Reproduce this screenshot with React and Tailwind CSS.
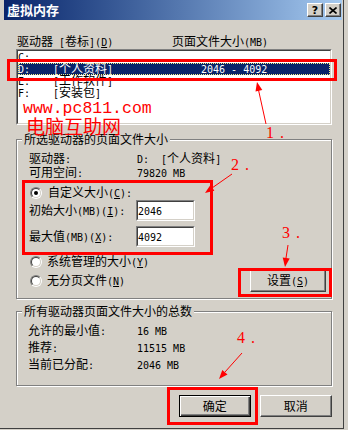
import React from "react";

const LAT = "font-['DejaVu_Sans_Mono',monospace] text-[10px]";

function T({ s, className = "" }) {
  const out = [];
  const isA = (c) => c.charCodeAt(0) < 128;
  let i = 0;
  while (i < s.length) {
    const c = s[i];
    if (c === "_") {
      out.push(
        <span key={i} className={`${LAT} underline underline-offset-[1px]`}>
          {s[i + 1]}
        </span>
      );
      i += 2;
      continue;
    }
    const a = isA(c);
    let j = i;
    while (j < s.length && s[j] !== "_" && isA(s[j]) === a) j++;
    out.push(
      <span key={i} className={a ? LAT : ""}>
        {s.slice(i, j)}
      </span>
    );
    i = j;
  }
  return <span className={`whitespace-pre ${className}`}>{out}</span>;
}

function Radio({ on }) {
  return (
    <div className="w-[12px] h-[12px] shrink-0 rounded-full border border-t-[#808080] border-l-[#808080] border-b-white border-r-white">
      <div className="flex w-full h-full items-center justify-center rounded-full border border-t-[#404040] border-l-[#404040] border-b-[#D4D0C8] border-r-[#D4D0C8] bg-white">
        {on && <div className="w-[4px] h-[4px] rounded-full bg-black" />}
      </div>
    </div>
  );
}

function Sunken({ className = "", children }) {
  return (
    <div className={`border border-t-[#808080] border-l-[#808080] border-b-white border-r-white ${className}`}>
      <div className="h-full border border-t-[#404040] border-l-[#404040] border-b-[#D4D0C8] border-r-[#D4D0C8] bg-white overflow-hidden">
        {children}
      </div>
    </div>
  );
}

const RAISED =
  "border border-t-white border-l-white border-b-[#404040] border-r-[#404040] shadow-[inset_-1px_-1px_0_#808080] bg-[#D4D0C8]";

function Row({ drive, label, size, sel }) {
  return (
    <div
      className={`flex h-[12px] items-center ${
        sel ? "bg-[#0A246A] text-white outline-1 outline-dotted outline-[#f2f08a] -outline-offset-1" : ""
      }`}
    >
      <div className="w-[35px]">
        <T s={drive} />
      </div>
      <div className="w-[148px]">
        <T s={label} />
      </div>
      {size && <T s={size} />}
    </div>
  );
}

function Group({ title, className = "", children }) {
  return (
    <div className={`flex flex-col border border-[#808080] shadow-[inset_1px_1px_0_#fff,1px_1px_0_#fff] ${className}`}>
      <div className="-mt-[7px] ml-[5px] px-[2px] h-[12px] self-start bg-[#D4D0C8]">
        <T s={title} />
      </div>
      {children}
    </div>
  );
}

function Num({ n, x, y }) {
  return (
    <div
      className="absolute flex font-['Liberation_Serif',serif] text-[16px] leading-[16px] text-[#FF0000]"
      style={{ left: x, top: y }}
    >
      <span>{n}</span>
      <span className="ml-[6px]">.</span>
    </div>
  );
}

export default function App() {
  return (
    <div className="relative w-[348px] h-[430px] overflow-hidden bg-[#D4D0C8] font-['Noto_Sans_CJK_SC',sans-serif] text-[12px] leading-[12px] text-black">
      <div className="w-[344px] h-[429px] border-r border-b border-[#404040]">
        {/* Title bar */}
        <div className="ml-[4px] mr-[1px] h-[20px] flex items-center bg-linear-to-r from-[#0A246A] to-[#A6CAF0] pl-[3px] pr-[1px]">
          <span className="text-white font-bold text-[13px] leading-[14px]">虚拟内存</span>
          <div className="ml-auto flex gap-[2px]">
            <div className={`w-[16px] h-[14px] flex items-center justify-center ${RAISED}`}>
              <span className="font-['DejaVu_Sans',sans-serif] font-bold text-[11px] leading-[11px] text-black">?</span>
            </div>
            <div className={`w-[16px] h-[14px] flex items-center justify-center ${RAISED}`}>
              <svg width="8" height="7" viewBox="0 0 8 7">
                <path d="M0.5 0.5 L7.5 6.5 M7.5 0.5 L0.5 6.5" stroke="#000" strokeWidth="1.6" />
              </svg>
            </div>
          </div>
        </div>

        {/* Body */}
        <div className="ml-[16px] w-[316px] flex flex-col">
          <div className="mt-[15px] flex h-[12px]">
            <div className="w-[156px] pl-[1px]">
              <T s="驱动器 [卷标](_D)" />
            </div>
            <T s="页面文件大小(MB)" />
          </div>

          <Sunken className="mt-[2px] h-[76px]">
            <Row drive="C:" label="" />
            <Row drive="D:" label="[个人资料]" size="2046 - 4092" sel />
            <Row drive="E:" label="[工作软件]" />
            <Row drive="F:" label="[安装包]" />
          </Sunken>

          <Group title="所选驱动器的页面文件大小" className="mt-[14px] h-[160px]">
            <div className="mt-[7px] flex h-[12px] pl-[12px]">
              <div className="w-[108px]">
                <T s="驱动器:" />
              </div>
              <T s="D:  [个人资料]" />
            </div>
            <div className="mt-[2px] flex h-[12px] pl-[12px]">
              <div className="w-[108px]">
                <T s="可用空间:" />
              </div>
              <T s="79820 MB" />
            </div>
            <div className="mt-[9px] flex h-[12px] items-center pl-[13px]">
              <Radio on />
              <T s="自定义大小(_C):" className="ml-[6px]" />
            </div>
            <div className="mt-[1px] flex h-[21px] items-center pl-[12px]">
              <div className="w-[107px]">
                <T s="初始大小(MB)(_I):" />
              </div>
              <Sunken className="w-[59px] h-[21px]">
                <div className="h-full flex items-center">
                  <T s="2046" />
                </div>
              </Sunken>
            </div>
            <div className="mt-[5px] flex h-[21px] items-center pl-[12px]">
              <div className="w-[107px]">
                <T s="最大值(MB)(_X):" />
              </div>
              <Sunken className="w-[59px] h-[21px]">
                <div className="h-full flex items-center">
                  <T s="4092" />
                </div>
              </Sunken>
            </div>
            <div className="mt-[9px] flex h-[12px] items-center pl-[13px]">
              <Radio />
              <T s="系统管理的大小(_Y)" className="ml-[5px]" />
            </div>
            <div className="mt-[2px] flex h-[22px] items-center pl-[13px] pr-[5px]">
              <Radio />
              <T s="无分页文件(_N)" className="ml-[5px]" />
              <div className={`ml-auto w-[76px] h-[22px] flex items-center justify-center ${RAISED}`}>
                <T s="设置(_S)" />
              </div>
            </div>
          </Group>

          <Group title="所有驱动器页面文件大小的总数" className="mt-[12px] h-[75px]">
            <div className="mt-[7px] flex h-[12px] pl-[11px]">
              <div className="w-[109px]">
                <T s="允许的最小值:" />
              </div>
              <T s="16 MB" />
            </div>
            <div className="mt-[5px] flex h-[12px] pl-[11px]">
              <div className="w-[109px]">
                <T s="推荐:" />
              </div>
              <T s="11515 MB" />
            </div>
            <div className="mt-[5px] flex h-[12px] pl-[11px]">
              <div className="w-[109px]">
                <T s="当前已分配:" />
              </div>
              <T s="2046 MB" />
            </div>
          </Group>

          <div className="mt-[9px] ml-[163px] flex gap-[9px]">
            <div className="w-[72px] h-[22px] flex items-center justify-center border border-black bg-[#D4D0C8] shadow-[inset_1px_1px_0_#fff,inset_-1px_-1px_0_#404040,inset_-2px_-2px_0_#808080]">
              确定
            </div>
            <div className={`w-[73px] h-[22px] flex items-center justify-center ${RAISED}`}>取消</div>
          </div>
        </div>
      </div>

      {/* Annotations */}
      <div className="absolute left-[23px] top-[101px] font-['Liberation_Mono',monospace] text-[16.5px] leading-[16.5px] text-[#FF0000] whitespace-pre">
        www.pc811.com
      </div>
      <div className="absolute left-[26px] top-[116px] text-[19px] leading-[19px] text-[#FF0000]">电脑互助网</div>

      <div className="absolute left-[7px] top-[59px] w-[330px] h-[22px] border-[3px] border-[#FF0000]" />
      <div className="absolute left-[22px] top-[180px] w-[191px] h-[75px] border-[3px] border-[#FF0000]" />
      <div className="absolute left-[238px] top-[268px] w-[94px] h-[29px] border-[3px] border-[#FF0000]" />
      <div className="absolute left-[167px] top-[387px] w-[91px] h-[38px] border-[3px] border-[#FF0000]" />

      <svg className="absolute left-0 top-0 pointer-events-none" width="348" height="430">
        <g stroke="#FF0000" strokeWidth="1" fill="none">
          <line x1="266" y1="124" x2="258.5" y2="90" />
          <line x1="232" y1="174" x2="212" y2="188" />
          <line x1="288" y1="245" x2="286" y2="258" />
          <line x1="242" y1="353" x2="225" y2="372" />
        </g>
        <g fill="#FF0000">
          <polygon points="257,82 262.3,90.1 255.5,91.5" />
          <polygon points="205,193 214.4,190.7 210.4,184.9" />
          <polygon points="285,267 289.7,258.6 282.7,257.6" />
          <polygon points="219,379 227.5,374.6 222.3,370" />
        </g>
      </svg>

      <Num n="1" x={266} y={125} />
      <Num n="2" x={231} y={157} />
      <Num n="3" x={282} y={225} />
      <Num n="4" x={237} y={330} />
    </div>
  );
}
